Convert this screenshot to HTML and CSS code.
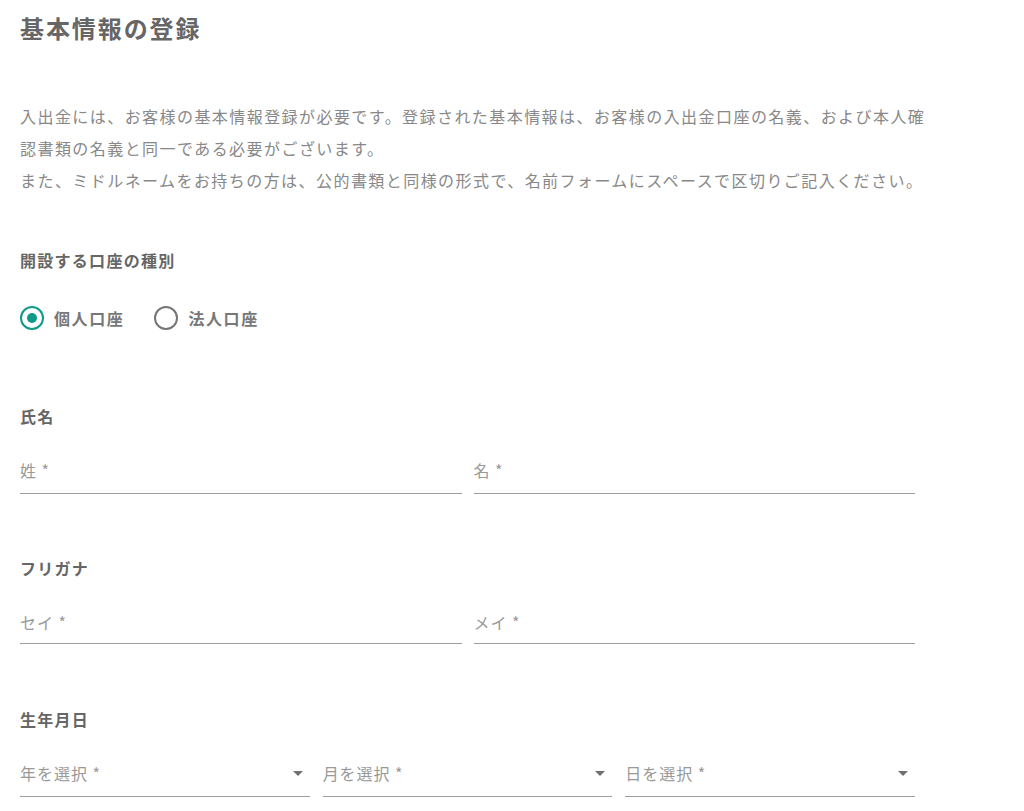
FILE: index.html
```html
<!DOCTYPE html>
<html lang="ja">
<head>
    <meta charset="UTF-8">
    <meta name="viewport" content="width=device-width, initial-scale=1.0">
    <title>基本情報の登録</title>
    <link rel="stylesheet" href="styles.css">
</head>
<body>
    <main class="page">
        <h1 class="page-title">基本情報の登録</h1>

        <p class="intro">入出金には、お客様の基本情報登録が必要です。登録された基本情報は、お客様の入出金口座の名義、および本人確認書類の名義と同一である必要がございます。<br>また、ミドルネームをお持ちの方は、公的書類と同様の形式で、名前フォームにスペースで区切りご記入ください。</p>

        <div class="section-label section-type">開設する口座の種別</div>
        <div class="radio-group">
            <label class="radio-option">
                <span class="radio checked"></span>
                <span class="radio-text">個人口座</span>
            </label>
            <label class="radio-option">
                <span class="radio"></span>
                <span class="radio-text">法人口座</span>
            </label>
        </div>

        <div class="section-label section-name">氏名</div>
        <div class="field-row two">
            <div class="field"><span class="placeholder">姓 *</span></div>
            <div class="field"><span class="placeholder">名 *</span></div>
        </div>

        <div class="section-label section-kana">フリガナ</div>
        <div class="field-row two kana">
            <div class="field"><span class="placeholder">セイ *</span></div>
            <div class="field"><span class="placeholder">メイ *</span></div>
        </div>

        <div class="section-label section-birth">生年月日</div>
        <div class="field-row three">
            <div class="field select"><span class="placeholder">年を選択 *</span><span class="arrow"></span></div>
            <div class="field select"><span class="placeholder">月を選択 *</span><span class="arrow"></span></div>
            <div class="field select"><span class="placeholder">日を選択 *</span><span class="arrow"></span></div>
        </div>
    </main>
</body>
</html>
```

FILE: styles.css
```css
body {
    margin: 0;
    font-family: "Noto Sans CJK JP", "Noto Sans", sans-serif;
    background: #fff;
    color: #666;
}
.page {
    width: 895px;
    padding: 0 20px;
}
.page-title {
    margin: 12px 0 0;
    font-size: 24px;
    line-height: 32px;
    font-weight: bold;
    letter-spacing: 0.08em;
    color: #666;
}
.intro {
    margin: 56px 0 0;
    width: 915px;
    font-size: 16px;
    line-height: 32px;
    letter-spacing: 0.09em;
    color: #888;
}
.section-label {
    font-size: 16px;
    line-height: 24px;
    font-weight: bold;
    letter-spacing: 0.08em;
    color: #666;
}
.section-type { margin-top: 52px; }
.section-name { margin-top: 74px; }
.section-kana { margin-top: 62px; }
.section-birth { margin-top: 63px; }

.radio-group {
    display: flex;
    gap: 30px;
    margin-top: 34px;
    height: 24px;
}
.radio-option {
    display: flex;
    align-items: center;
    gap: 10px;
    cursor: pointer;
}
.radio {
    width: 20px;
    height: 20px;
    border: 2px solid #757575;
    border-radius: 50%;
    display: flex;
    align-items: center;
    justify-content: center;
}
.radio.checked {
    border-color: #0e9a87;
}
.radio.checked::after {
    content: "";
    width: 10px;
    height: 10px;
    border-radius: 50%;
    background: #0e9a87;
}
.radio-text {
    font-size: 16px;
    font-weight: bold;
    letter-spacing: 0.1em;
    color: #777;
}

.field-row {
    display: grid;
    margin-top: 22px;
}
.field-row.two {
    grid-template-columns: 1fr 1fr;
    gap: 12px;
}
.field-row.three {
    grid-template-columns: 1fr 1fr 1fr;
    gap: 13px;
}
.field {
    display: flex;
    align-items: center;
    justify-content: space-between;
    padding: 8px 0 11px;
    border-bottom: 1px solid #9e9e9e;
}
.kana .field {
    padding-bottom: 9px;
}
.field.select {
    padding-right: 7px;
}
.placeholder {
    font-size: 16px;
    line-height: 24px;
    letter-spacing: 0.06em;
    color: #999;
}
.arrow {
    width: 0;
    height: 0;
    border-left: 5px solid transparent;
    border-right: 5px solid transparent;
    border-top: 5px solid #707070;
}
```
